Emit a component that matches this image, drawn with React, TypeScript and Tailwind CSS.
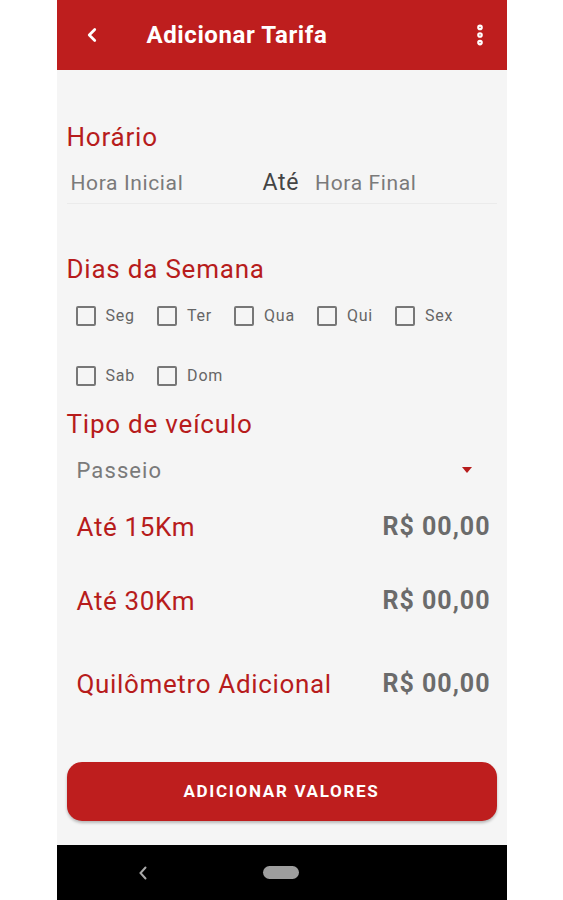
import { ChevronLeft, EllipsisVertical } from 'lucide-react';

const dias = ['Seg', 'Ter', 'Qua', 'Qui', 'Sex', 'Sab', 'Dom'];

const faixas = [
  { label: 'Até 15Km', mt: 'mt-[17px]' },
  { label: 'Até 30Km', mt: 'mt-[34px]' },
  { label: 'Quilômetro Adicional', mt: 'mt-[43px]' },
];

const App = () => {
  return (
    <div className="min-h-screen bg-white flex justify-center font-['Roboto',sans-serif]">
      <div className="w-[450px] h-[900px] flex flex-col bg-[#f5f5f5]">
        {/* toolbar */}
        <div className="h-[70px] bg-[#be1e1e] flex items-center pl-[24px] pr-[14px] text-white">
          <ChevronLeft size={22} strokeWidth={3} />
          <h1 className="ml-[44px] text-[24px] font-bold tracking-[0.025em]">Adicionar Tarifa</h1>
          <EllipsisVertical size={26} strokeWidth={3.2} className="ml-auto" />
        </div>

        <div className="flex-1 flex flex-col px-[10px]">
          <h2 className="mt-[52px] text-[26px] leading-[31px] text-[#b71c1c] tracking-[0.03em]">Horário</h2>
          <div className="mt-[11px] h-[40px] flex items-center border-b border-[#ebebeb]">
            <span className="w-[196px] pl-[4px] text-[21px] text-[#7a7a7a] tracking-[0.03em]">Hora Inicial</span>
            <span className="text-[23px] text-[#444] tracking-[0.03em]">Até</span>
            <span className="ml-[16px] text-[21px] text-[#7a7a7a] tracking-[0.03em]">Hora Final</span>
          </div>

          <h2 className="mt-[50px] text-[26px] leading-[31px] text-[#b71c1c] tracking-[0.03em]">Dias da Semana</h2>
          <div className="mt-[11px] pl-[9px] flex flex-wrap gap-x-[22px] gap-y-[20px]">
            {dias.map((d) => (
              <label key={d} className="h-[40px] flex items-center">
                <span className="w-[20px] h-[20px] border-2 border-[#777] rounded-[2px]" />
                <span className="ml-[10px] text-[16px] text-[#666] tracking-[0.05em]">{d}</span>
              </label>
            ))}
          </div>

          <h2 className="mt-[13px] text-[26px] leading-[31px] text-[#b71c1c] tracking-[0.03em]">Tipo de veículo</h2>
          <div className="mt-[10px] h-[40px] flex items-center justify-between pl-[10px] pr-[25px]">
            <span className="text-[22px] text-[#7a7a7a] tracking-[0.05em]">Passeio</span>
            <svg width="10" height="6" viewBox="0 0 10 6">
              <path d="M0 0h10L5 6z" fill="#b71c1c" />
            </svg>
          </div>

          {faixas.map((f) => (
            <div key={f.label} className={`${f.mt} h-[40px] flex items-center justify-between pl-[10px] pr-[6px]`}>
              <span className="text-[26px] text-[#b71c1c] tracking-[0.025em]">{f.label}</span>
              <span className="text-[25px] font-bold text-[#6b6b6b] tracking-[0.04em]">R$ 00,00</span>
            </div>
          ))}

          <button
            type="button"
            className="mt-[58px] h-[59px] w-full rounded-[15px] bg-[#be1e1e] text-white text-[17px] font-bold tracking-[0.1em] shadow-[0_2px_3px_rgba(0,0,0,0.25)]"
          >
            ADICIONAR VALORES
          </button>
        </div>

        {/* android nav bar */}
        <div className="h-[55px] bg-black flex items-center">
          <svg width="8" height="14" viewBox="0 0 8 14" className="ml-[82px]">
            <path d="M6.5 1.5L1.5 7l5 5.5" stroke="#aaa" strokeWidth="2" fill="none" strokeLinecap="round" />
          </svg>
          <span className="ml-[116px] w-[36px] h-[13px] rounded-full bg-[#9e9e9e]" />
        </div>
      </div>
    </div>
  );
};

export default App;
